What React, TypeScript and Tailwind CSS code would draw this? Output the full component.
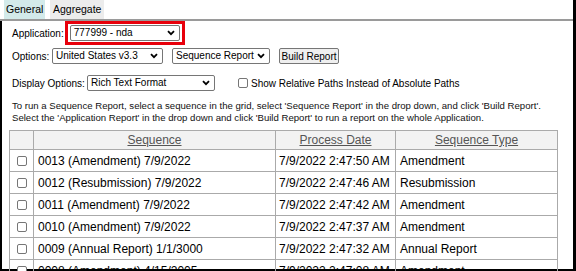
import React from 'react';

const rows = [
  { seq: '0013 (Amendment) 7/9/2022', date: '7/9/2022 2:47:50 AM', type: 'Amendment' },
  { seq: '0012 (Resubmission) 7/9/2022', date: '7/9/2022 2:47:46 AM', type: 'Resubmission' },
  { seq: '0011 (Amendment) 7/9/2022', date: '7/9/2022 2:47:42 AM', type: 'Amendment' },
  { seq: '0010 (Amendment) 7/9/2022', date: '7/9/2022 2:47:37 AM', type: 'Amendment' },
  { seq: '0009 (Annual Report) 1/1/3000', date: '7/9/2022 2:47:32 AM', type: 'Annual Report' },
  { seq: '0008 (Amendment) 4/15/2005', date: '7/9/2022 2:47:08 AM', type: 'Amendment' },
];

function Chevron() {
  return (
    <svg width="8" height="6" viewBox="0 0 8 6" className="shrink-0">
      <path d="M1 1.2l3 3 3-3" fill="none" stroke="#000" strokeWidth="1.8" />
    </svg>
  );
}

function FakeSelect({ value, className }: { value: string; className: string }) {
  return (
    <div
      className={`flex items-center justify-between h-[16px] bg-white border border-[#767676] rounded-[2px] pl-[3px] pr-[4px] text-[10px] leading-none ${className}`}
    >
      <span className="whitespace-nowrap">{value}</span>
      <Chevron />
    </div>
  );
}

function Box({ className = '' }: { className?: string }) {
  return <div className={`w-[10px] h-[10px] bg-white border border-[#767676] rounded-[2px] ${className}`} />;
}

export default function App() {
  return (
    <div className="w-[576px] h-[271px] overflow-hidden bg-white text-black font-['Liberation_Sans',Arial,sans-serif]">
      <div className="flex flex-col h-full border-r-[3px] border-black">
        {/* tabs */}
        <div className="flex items-end h-[19px] pl-[4px] gap-[5px] text-[10.5px] leading-none">
          <div className="h-[19px] w-[41px] flex items-center pl-[2px] bg-[#d3eaea]">General</div>
          <div className="h-[19px] w-[54px] flex items-center pl-[3px] bg-[#ececec]">Aggregate</div>
        </div>
        <div className="h-[2px] bg-[#9a9a9a]" />

        <div className="flex-1 flex flex-col border-l-2 border-b-2 border-black pl-[10px] text-[10px] min-h-0">
          <div className="flex items-center gap-[1px]">
            <span>Application:</span>
            <div className="border-[3px] border-[#e8000b] px-[2px] py-[1px]">
              <FakeSelect value="777999 - nda" className="w-[110px] h-[15px]" />
            </div>
          </div>

          <div className="flex items-center mt-[3px] h-[16px]">
            <span className="w-[40px]">Options:</span>
            <FakeSelect value="United States v3.3" className="w-[111px]" />
            <FakeSelect value="Sequence Report" className="w-[98px] ml-[9px]" />
            <div className="ml-[9px] h-[16px] w-[60px] flex items-center justify-center bg-[#efefef] border border-[#767676] rounded-[2px] text-[10px]">
              Build Report
            </div>
          </div>

          <div className="flex items-center mt-[11px] h-[16px]">
            <span className="w-[75px]">Display Options:</span>
            <FakeSelect value="Rich Text Format" className="w-[128px]" />
            <Box className="ml-[23px]" />
            <span className="ml-[3px]">Show Relative Paths Instead of Absolute Paths</span>
          </div>

          <p className="mt-[9px] leading-[12px] text-[9.6px] text-[#111]">
            To run a Sequence Report, select a sequence in the grid, select 'Sequence Report' in the drop down, and click 'Build Report'.
            <br />
            Select the 'Application Report' in the drop down and click 'Build Report' to run a report on the whole Application.
          </p>

          <table className="mt-[6px] ml-[-3px] w-[549px] table-fixed border-collapse text-[12px]">
            <colgroup>
              <col className="w-[24px]" />
              <col className="w-[242px]" />
              <col className="w-[120px]" />
              <col />
            </colgroup>
            <thead>
              <tr className="h-[17px] bg-[#f2f2f2] text-[#555]">
                <th className="border border-[#aaa]" />
                <th className="border border-[#aaa] font-normal underline">Sequence</th>
                <th className="border border-[#aaa] font-normal underline">Process Date</th>
                <th className="border border-[#aaa] font-normal underline">Sequence Type</th>
              </tr>
            </thead>
            <tbody>
              {rows.map((r) => (
                <tr key={r.seq} className="h-[22px]">
                  <td className="border border-[#aaa]">
                    <Box className="mx-auto" />
                  </td>
                  <td className="border border-[#aaa] pl-[4px] whitespace-nowrap">{r.seq}</td>
                  <td className="border border-[#aaa] pl-[3px] whitespace-nowrap">{r.date}</td>
                  <td className="border border-[#aaa] pl-[4px] whitespace-nowrap">{r.type}</td>
                </tr>
              ))}
            </tbody>
          </table>
        </div>
      </div>
    </div>
  );
}
